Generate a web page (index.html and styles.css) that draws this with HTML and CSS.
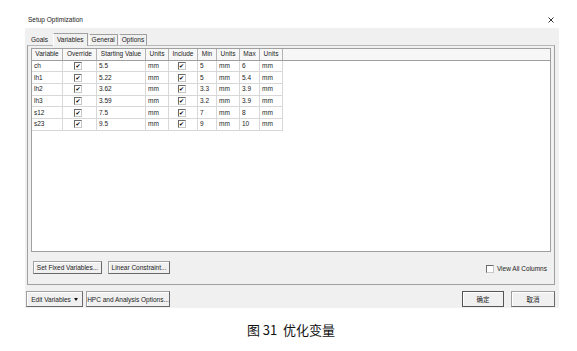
FILE: index.html
```html
<html>
<head>
<title>Setup Optimization</title>
<link rel="stylesheet" href="styles.css">
</head>
<body>
<div class="titlebar">
  <span class="title">Setup Optimization</span>
  <svg class="close" width="6" height="6" viewBox="0 0 6 6"><path d="M0.5 0.5 L5.5 5.5 M5.5 0.5 L0.5 5.5" stroke="#333" stroke-width="1"/></svg>
</div>
<div class="panel">
  <div class="tabs">
    <span class="tab plain">Goals</span>
    <span class="tab selected">Variables</span>
    <span class="tab">General</span>
    <span class="tab">Options</span>
  </div>
  <div class="tabpanel">
    <div class="grid">
      <table>
        <tr class="head">
          <th class="c-var">Variable</th>
          <th class="c-ovr">Override</th>
          <th class="c-start">Starting Value</th>
          <th class="c-u1">Units</th>
          <th class="c-inc">Include</th>
          <th class="c-min">Min</th>
          <th class="c-u2">Units</th>
          <th class="c-max">Max</th>
          <th class="c-u3">Units</th>
          <th class="filler"></th>
        </tr>
        <tr><td>ch</td><td class="chk"><span class="box">&#10004;</span></td><td>5.5</td><td>mm</td><td class="chk"><span class="box">&#10004;</span></td><td>5</td><td>mm</td><td>6</td><td>mm</td><td class="filler"></td></tr>
        <tr><td>lh1</td><td class="chk"><span class="box">&#10004;</span></td><td>5.22</td><td>mm</td><td class="chk"><span class="box">&#10004;</span></td><td>5</td><td>mm</td><td>5.4</td><td>mm</td><td class="filler"></td></tr>
        <tr><td>lh2</td><td class="chk"><span class="box">&#10004;</span></td><td>3.62</td><td>mm</td><td class="chk"><span class="box">&#10004;</span></td><td>3.3</td><td>mm</td><td>3.9</td><td>mm</td><td class="filler"></td></tr>
        <tr><td>lh3</td><td class="chk"><span class="box">&#10004;</span></td><td>3.59</td><td>mm</td><td class="chk"><span class="box">&#10004;</span></td><td>3.2</td><td>mm</td><td>3.9</td><td>mm</td><td class="filler"></td></tr>
        <tr><td>s12</td><td class="chk"><span class="box">&#10004;</span></td><td>7.5</td><td>mm</td><td class="chk"><span class="box">&#10004;</span></td><td>7</td><td>mm</td><td>8</td><td>mm</td><td class="filler"></td></tr>
        <tr><td>s23</td><td class="chk"><span class="box">&#10004;</span></td><td>9.5</td><td>mm</td><td class="chk"><span class="box">&#10004;</span></td><td>9</td><td>mm</td><td>10</td><td>mm</td><td class="filler"></td></tr>
      </table>
    </div>
    <div class="gridbar">
      <span class="btn w-fixed">Set Fixed Variables...</span>
      <span class="btn w-linear">Linear Constraint...</span>
      <span class="spacer"></span>
      <span class="viewall"><span class="box small"></span>View All Columns</span>
    </div>
  </div>
  <div class="footer">
    <span class="btn w-edit">Edit Variables <span class="arrow"></span></span>
    <span class="btn w-hpc">HPC and Analysis Options...</span>
    <span class="spacer"></span>
    <span class="btn default w-ok">确定</span>
    <span class="btn w-cancel">取消</span>
  </div>
</div>
<div class="caption">图 31&nbsp; 优化变量</div>
</body>
</html>
```

FILE: styles.css
```css
body {
  margin: 0;
  width: 577px;
  background-color: white;
  color: #222;
  font-family: "Liberation Sans", "Noto Sans CJK SC", sans-serif;
  font-size: 6.5px;
}
.titlebar {
  height: 28px;
  display: flex;
  align-items: flex-end;
  padding: 0 23px 4px 28px;
  box-sizing: border-box;
}
.title {
  flex: 1;
  line-height: 8px;
}
.close {
  margin-bottom: 1px;
}
.panel {
  margin-left: 25px;
  width: 534px;
  height: 280px;
  background-color: #f0f0f0;
  padding: 5px 4px 0 2px;
  box-sizing: border-box;
}
.tabs {
  display: flex;
  align-items: flex-end;
  height: 12px;
  padding-left: 1px;
}
.tab {
  height: 10px;
  line-height: 10px;
  padding: 0 2px;
  border: 1px solid #a0a0a0;
  border-bottom: none;
  border-left-color: #fff;
  margin-right: 1px;
}
.tab.plain {
  border-color: transparent;
  padding-right: 3px;
}
.tab.selected {
  height: 12px;
  line-height: 11px;
  background-color: #f0f0f0;
  margin-bottom: -1px;
  position: relative;
  padding: 0 3px;
}
.tabpanel {
  width: 528px;
  height: 240px;
  border: 1px solid #a0a0a0;
  border-top-color: #b8b8b8;
  padding: 2px 3px 0 3px;
  box-sizing: border-box;
}
.grid {
  height: 204px;
  background-color: white;
  border: 1px solid #a0a0a0;
  box-sizing: border-box;
  overflow: hidden;
}
table {
  width: 100%;
  border-collapse: collapse;
  table-layout: fixed;
  font-size: 6.5px;
  color: #222;
}
th, td {
  padding: 0 0 0 2px;
  text-align: left;
  font-weight: normal;
  white-space: nowrap;
  overflow: hidden;
  font-size: 6.5px;
}
th {
  height: 11px;
  line-height: 10px;
  text-align: center;
  padding: 0;
  background-color: #f7f7f7;
  border-right: 1px solid #b4b4b4;
  border-bottom: 1px solid #a0a0a0;
}
td {
  height: 11.7px;
  line-height: 10px;
  border-right: 1px solid #d8d8d8;
  border-bottom: 1px solid #d8d8d8;
}
th.filler {
  border-right: none;
}
td.filler {
  border: none;
}
.c-var { width: 30px; }
.c-ovr { width: 33px; }
.c-start { width: 48px; }
.c-u1 { width: 22px; }
.c-inc { width: 28px; }
.c-min { width: 18px; }
.c-u2 { width: 22px; }
.c-max { width: 19px; }
.c-u3 { width: 22px; }
td.chk {
  text-align: center;
  padding: 0;
}
.box {
  display: inline-block;
  width: 6px;
  height: 6px;
  border: 1px solid #6a6a6a;
  border-right-color: #c8c8c8;
  border-bottom-color: #c8c8c8;
  background-color: white;
  font-size: 6px;
  line-height: 6px;
  text-align: center;
  vertical-align: middle;
  color: #000;
  font-family: "DejaVu Sans", sans-serif;
  margin-left: -3px;
}
.box.small {
  margin: 0 3px 0 0;
}
.gridbar {
  display: flex;
  align-items: center;
  margin-top: 9px;
  padding: 0 4px 0 2px;
}
.spacer {
  flex: 1;
}
.viewall {
  display: flex;
  align-items: center;
  margin-top: 2px;
}
.btn {
  display: inline-flex;
  align-items: center;
  justify-content: center;
  height: 13px;
  box-sizing: border-box;
  background-color: #f0f0f0;
  border: 1px solid #a0a0a0;
  border-right-color: #696969;
  border-bottom-color: #696969;
  box-shadow: inset 1px 1px #fff;
  margin-right: 6px;
  white-space: nowrap;
}
.w-fixed { width: 69px; }
.w-linear { width: 62px; }
.footer {
  display: flex;
  align-items: center;
  margin-top: 6px;
  padding-left: 0;
}
.footer .btn {
  height: 16px;
}
.w-edit {
  width: 57px;
  margin-left: -1px;
  margin-right: 3px;
}
.w-hpc { width: 84px; }
.w-ok {
  width: 42px;
  margin-right: 7px;
}
.w-cancel {
  width: 44px;
  margin-right: 0;
}
.btn.default {
  border-color: #555;
}
.arrow {
  display: inline-block;
  width: 0;
  height: 0;
  border-left: 2.5px solid transparent;
  border-right: 2.5px solid transparent;
  border-top: 3px solid #111;
  margin-left: 3px;
}
.caption {
  margin-top: 14px;
  padding-left: 5px;
  text-align: center;
  font-family: "Noto Sans CJK SC", sans-serif;
  font-size: 13px;
  line-height: 16px;
  color: #111;
}
```
